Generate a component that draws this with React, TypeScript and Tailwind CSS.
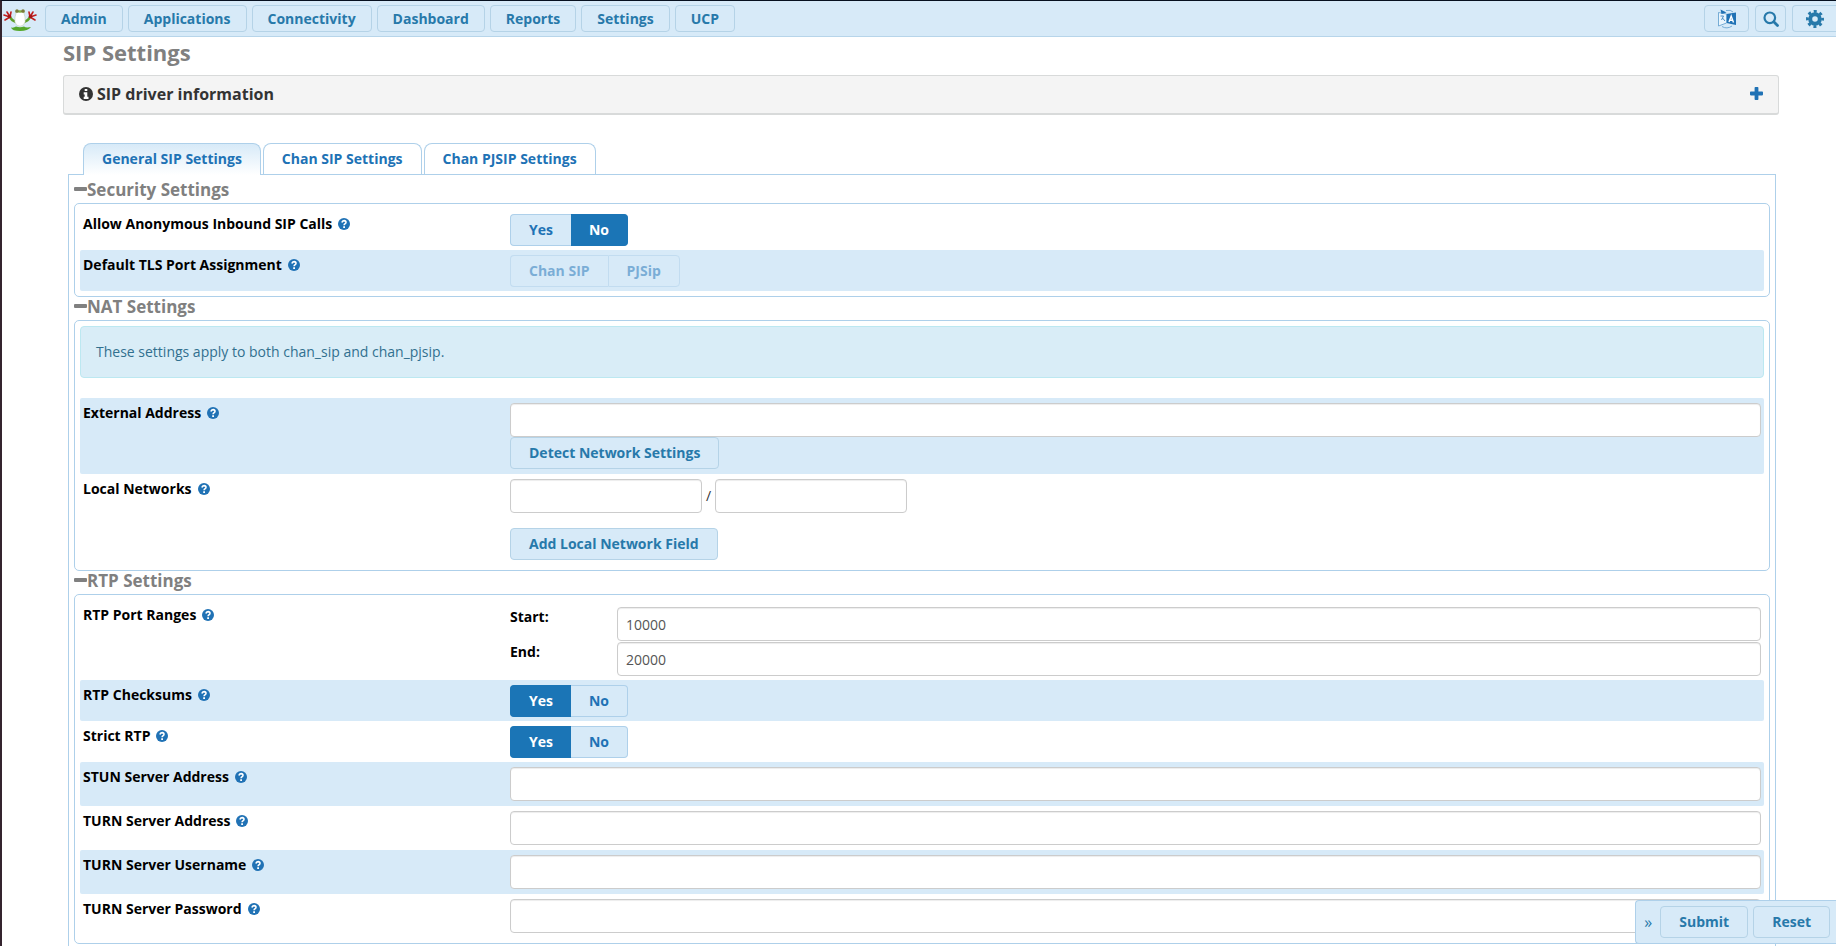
import React, { useState } from "react";

const btn = "rounded-[4px] border border-[#b5d3e7] bg-[#d7eaf8] text-sm font-bold text-[#2779aa]";

function Frog() {
  return (
    <svg viewBox="0 0 36 24" className="h-6 w-9" aria-hidden="true">
      <path d="M8 10q2 4 6 5M28 10q-2 4-6 5" stroke="#5f9f2a" strokeWidth="2.400" fill="none" strokeLinecap="round" />
      <path d="M9 20.500q3 .5 5-1 4 1.500 8 0 2 1.500 7 .5-3 4-11 4T9 20.500z" fill="#55a82a" />
      <path d="M14.500 4h7q.5 3 1.500 6 1 5-1.500 8-3.500 2.500-7 0-2.500-3-1.500-8 1-3 1.500-6z" fill="#fff" stroke="#b9c6a5" strokeWidth=".5" />
      <path d="M13.500 3.500h9v2h-9z" fill="#6c9a35" />
      <circle cx="15" cy="4" r="1.700" fill="#7c7a3a" />
      <circle cx="21" cy="4" r="1.700" fill="#7c7a3a" />
      <circle cx="18" cy="4.500" r="1" fill="#86b73e" />
      <path d="M8 10L2 8M8 10L5 5M8 10l1-5M8 10l-5 3M28 10l6-2M28 10l3-5M28 10l-1-5M28 10l5 3" stroke="#c01f1f" strokeWidth="1.600" fill="none" strokeLinecap="round" />
      <circle cx="7.500" cy="9.500" r="1.800" fill="#a51616" />
      <circle cx="28.500" cy="9.500" r="1.800" fill="#a51616" />
    </svg>
  );
}

function LanguageIcon() {
  return (
    <svg viewBox="0 0 20 20" className="h-5 w-5" aria-hidden="true">
      <path d="M9.500 5l9.500-1.500v12.500L9.500 14z" fill="#2072b5" />
      <path d="M1.500 3.500L9.500 5v9l-8 3z" fill="#eaf5fd" stroke="#5c9ccc" strokeWidth=".8" />
      <path d="M3.500 .5l6 3-5 1.500z" fill="#2072b5" />
      <path d="M9 1.500q5-1 7 1.500M5 17.500q5 3 10-.5" fill="none" stroke="#5c9ccc" strokeWidth=".8" />
      <path d="M12 13l2.200-6 2.300 6.500M12.800 11.200h3" fill="none" stroke="#fff" strokeWidth="1.400" />
      <path d="M3.500 7h3l-2 4M5.500 9l2.500 3" fill="none" stroke="#3a82bd" strokeWidth=".9" />
    </svg>
  );
}

function SearchIcon() {
  return (
    <svg viewBox="0 0 16 16" className="h-4 w-4" fill="none" stroke="currentColor" aria-hidden="true">
      <circle cx="6.800" cy="6.800" r="5.300" strokeWidth="2.200" />
      <path d="M11 11l3.500 3.500" strokeWidth="2.800" strokeLinecap="round" />
    </svg>
  );
}

function GearIcon() {
  return (
    <svg viewBox="0 0 18 18" className="h-[18px] w-[18px]" fill="none" stroke="currentColor" aria-hidden="true">
      <circle cx="9" cy="9" r="4.800" strokeWidth="4" />
      <circle cx="9" cy="9" r="7.600" strokeWidth="2.800" strokeDasharray="2.985 2.985" strokeDashoffset="1.492" />
    </svg>
  );
}

function InfoIcon() {
  return (
    <svg viewBox="0 0 14 14" className="mr-1 h-3.5 w-3.5" aria-hidden="true">
      <circle cx="7" cy="7" r="7" fill="currentColor" />
      <path d="M5.700 2h2.600v2H5.700zM4.700 5.300h3.600v4.500h1.200V12H4.700V9.800h1V7.400h-1z" fill="#fff" />
    </svg>
  );
}

function PlusIcon() {
  return (
    <svg viewBox="0 0 13 13" className="h-[13px] w-[13px]" aria-hidden="true">
      <path d="M5.400 0h2.200q.8 0 .8.800v3.800h3.800q.8 0 .8.800v2.200q0 .8-.8.800H8.400v3.800q0 .8-.8.800H5.400q-.8 0-.8-.8V8.400H.8Q0 8.400 0 7.600V5.400q0-.8.800-.8h3.800V.8q0-.8.800-.8z" fill="currentColor" />
    </svg>
  );
}

function MinusIcon() {
  return (
    <svg viewBox="0 0 13 13" className="h-[13px] w-[13px]" aria-hidden="true">
      <rect y="4" width="13" height="4" rx="1" fill="currentColor" />
    </svg>
  );
}

function Help() {
  return (
    <svg viewBox="0 0 12 12" className="ml-1.5 h-3 w-3 text-[#2072b5]" aria-hidden="true">
      <circle cx="6" cy="6" r="6" fill="currentColor" />
      <path d="M3.900 4.500Q4.300 2.600 6.100 2.600 8 2.700 8 4.300 8 5.200 7 5.800 6.100 6.300 6.100 7.200" fill="none" stroke="#fff" strokeWidth="1.600" />
      <path d="M5.200 8.200h1.800v1.700H5.200z" fill="#fff" />
    </svg>
  );
}

function Row({ label, htmlFor, shaded, children }: { label: string; htmlFor?: string; shaded?: boolean; children: React.ReactNode }) {
  return (
    <div className={shaded ? "flex rounded-[2px] bg-[#d7eaf8]" : "flex"}>
      <div className="w-1/4 shrink-0 pt-[5px] pl-[3px]">
        <label htmlFor={htmlFor} className="flex items-center leading-5 font-bold text-black">
          {label}
          <Help />
        </label>
      </div>
      <div className="min-w-0 flex-1 pt-[5px] pr-[3px] pl-[9px]">{children}</div>
    </div>
  );
}

function TextField({ id, value = "", label }: { id: string; value?: string; label?: string }) {
  return (
    <input
      id={id}
      type="text"
      aria-label={label}
      defaultValue={value}
      className="block h-[34px] w-full rounded-[4px] border border-[#ccc] bg-white px-2 text-sm text-[#555] shadow-[inset_0_1px_1px_rgba(0,0,0,0.075)] outline-none"
    />
  );
}

function Toggle({ name, options, initial, disabled }: { name: string; options: string[]; initial?: string; disabled?: boolean }) {
  const [value, setValue] = useState(initial);
  return (
    <div role="radiogroup" aria-label={name} className={disabled ? "mb-1 flex opacity-50" : "mb-1 flex"}>
      {options.map((o) => (
        <label
          key={o}
          className={
            "flex h-8 items-center border border-l-0 px-[18px] font-bold first:rounded-l-[4px] first:border-r-0 first:border-l last:rounded-r-[4px] " +
            (value === o ? "border-[#1b75b6] bg-[#1b75b6] text-white " : "border-[#aed0ea] bg-[#d7eaf8] text-[#2072b5] ") +
            (disabled ? "last:border-l" : "")
          }
        >
          <input type="radio" name={name} className="sr-only" checked={value === o} disabled={disabled} onChange={() => setValue(o)} />
          {o}
        </label>
      ))}
    </div>
  );
}

function Section({ title, children }: { title: string; children: React.ReactNode }) {
  return (
    <section>
      <h2 className="flex h-[23px] items-center pb-1 text-[17px] leading-none font-bold text-[#808080]">
        <MinusIcon />
        {title}
      </h2>
      <div className="rounded-[5px] border border-[#aed0ea] p-[5px]">{children}</div>
    </section>
  );
}

const menu = ["Admin", "Applications", "Connectivity", "Dashboard", "Reports", "Settings", "UCP"];
const tabs = ["General SIP Settings", "Chan SIP Settings", "Chan PJSIP Settings"];

export default function App() {
  return (
    <div className="flex h-screen flex-col overflow-hidden border-t border-l-2 border-t-[#06101f] border-l-[#34242e] bg-white font-['Open_Sans',sans-serif] text-sm text-[#333]">
      <header className="flex h-9 shrink-0 items-center gap-1.5 border-b border-[#b7d5ea] bg-[#d7eaf8]">
        <a href="#home" aria-label="Home" className="flex w-[37px] items-center">
          <Frog />
        </a>
        <nav className="flex gap-[5px]">
          {menu.map((m) => (
            <button key={m} type="button" className={btn + " h-[27px] px-[15px]"}>{m}</button>
          ))}
        </nav>
        <div className="ml-auto flex gap-1.5">
          <button type="button" aria-label="Language" className={btn + " flex h-[27px] w-[45px] items-center justify-center"}><LanguageIcon /></button>
          <button type="button" aria-label="Search" className={btn + " flex h-[27px] w-[31px] items-center justify-center"}><SearchIcon /></button>
          <button type="button" aria-label="Options" className={btn + " flex h-[27px] w-11 items-center justify-center rounded-r-none border-r-0"}><GearIcon /></button>
        </div>
      </header>

      <main className="mr-[57px] ml-[61px] flex min-h-0 flex-1 flex-col">
        <h1 className="h-[38px] shrink-0 text-[22px] leading-[30px] font-bold text-[#808080]">SIP Settings</h1>
        <div className="flex h-10 shrink-0 items-center rounded-[3px] border border-b-2 border-[#d8dada] bg-[#f4f4f4] px-[15px] pb-0.5 text-base font-bold">
          <InfoIcon />
          SIP driver information
          <button type="button" aria-label="Expand" className="ml-auto text-[#2072b5]"><PlusIcon /></button>
        </div>

        <div role="tablist" className="mt-7 flex shrink-0 gap-0.5 pl-5">
          {tabs.map((t, i) => (
            <button
              key={t}
              type="button"
              role="tab"
              aria-selected={i === 0}
              className={
                "h-8 rounded-t-[8px] border border-b-0 border-[#aed0ea] px-[18px] pb-0.5 font-bold text-[#2072b5] " +
                (i === 0 ? "z-10 bg-linear-to-b from-[#d7eaf8] to-white" : "bg-white")
              }
            >
              {t}
            </button>
          ))}
        </div>

        <div className="-mt-px mr-[3px] ml-[5px] min-h-0 flex-1 border border-b-0 border-[#aed0ea] px-[5px] pt-[5px]">
          <Section title="Security Settings">
            <Row label="Allow Anonymous Inbound SIP Calls">
              <Toggle name="Allow Anonymous Inbound SIP Calls" options={["Yes", "No"]} initial="No" />
            </Row>
            <Row label="Default TLS Port Assignment" shaded>
              <Toggle name="Default TLS Port Assignment" options={["Chan SIP", "PJSip"]} disabled />
            </Row>
          </Section>

          <Section title="NAT Settings">
            <p className="mb-5 rounded-[4px] border border-[#bce8f1] bg-[#d9edf7] p-[15px] leading-5 text-[#31708f]">
              These settings apply to both chan_sip and chan_pjsip.
            </p>
            <Row label="External Address" htmlFor="external" shaded>
              <TextField id="external" />
              <button type="button" className={btn + " mb-[5px] h-8 px-[18px]"}>Detect Network Settings</button>
            </Row>
            <Row label="Local Networks" htmlFor="network">
              <div className="flex items-center gap-1">
                <div className="w-48"><TextField id="network" /></div>
                /
                <div className="w-48"><TextField id="mask" label="Netmask" /></div>
              </div>
              <button type="button" className={btn + " mt-[15px] mb-[5px] h-8 px-[18px]"}>Add Local Network Field</button>
            </Row>
          </Section>

          <Section title="RTP Settings">
            <Row label="RTP Port Ranges">
              <div className="flex flex-col gap-px pt-0.5 pb-1">
                {[["Start:", "10000"], ["End:", "20000"]].map(([name, value]) => (
                  <div key={name} className="flex">
                    <label htmlFor={name} className="w-[107px] shrink-0 leading-5 font-bold text-black">{name}</label>
                    <TextField id={name} value={value} />
                  </div>
                ))}
              </div>
            </Row>
            <Row label="RTP Checksums" shaded><Toggle name="RTP Checksums" options={["Yes", "No"]} initial="Yes" /></Row>
            <Row label="Strict RTP"><Toggle name="Strict RTP" options={["Yes", "No"]} initial="Yes" /></Row>
            {["STUN Server Address", "TURN Server Address", "TURN Server Username", "TURN Server Password"].map((f, i) => (
              <Row key={f} label={f} htmlFor={f} shaded={i % 2 === 0}>
                <div className="pb-[5px]"><TextField id={f} /></div>
              </Row>
            ))}
          </Section>
        </div>
      </main>

      <div className="fixed right-0 bottom-0.5 z-20 flex h-11 items-center gap-2 rounded-l-[4px] border border-r-0 border-[#aed0ea] bg-[#d7eaf8] pr-1.5">
        <button type="button" aria-label="Collapse" className="w-4 text-right text-base text-[#2779aa]">»</button>
        <div className="flex gap-[5px]">
          <button type="submit" className={btn + " h-8 px-[18px]"}>Submit</button>
          <button type="reset" className={btn + " h-8 px-[18px]"}>Reset</button>
        </div>
      </div>
    </div>
  );
}
